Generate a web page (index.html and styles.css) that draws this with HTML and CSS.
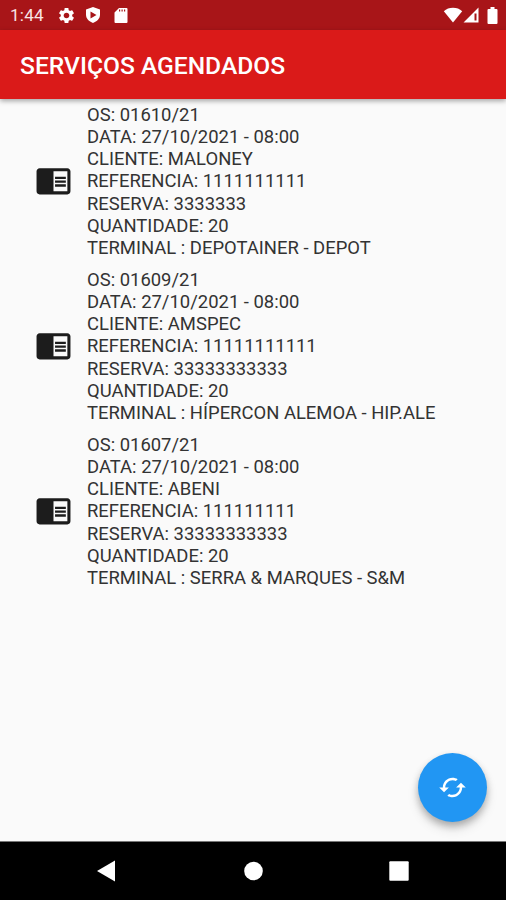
FILE: index.html
```html
<!DOCTYPE html>
<html lang="pt-BR">
<head>
    <meta charset="UTF-8">
    <title>Serviços Agendados</title>
    <link rel="stylesheet" href="styles.css">
</head>
<body>
    <div class="app">
        <div class="status-bar">
            <span class="time">1:44</span>
            <svg class="icon-gear" viewBox="0 0 24 24"><path fill-rule="evenodd" d="M19.14 12.94c.04-.3.06-.61.06-.94 0-.32-.02-.64-.07-.94l2.03-1.58c.18-.14.23-.41.12-.61l-1.92-3.32c-.12-.22-.37-.29-.59-.22l-2.39.96c-.5-.38-1.03-.7-1.62-.94l-.36-2.54c-.04-.24-.24-.41-.48-.41h-3.84c-.24 0-.43.17-.47.41l-.36 2.54c-.59.24-1.13.57-1.62.94l-2.39-.96c-.22-.08-.47 0-.59.22L2.74 8.87c-.12.21-.08.47.12.61l2.03 1.58c-.05.3-.09.63-.09.94s.02.64.07.94l-2.03 1.58c-.18.14-.23.41-.12.61l1.92 3.32c.12.22.37.29.59.22l2.39-.96c.5.38 1.03.7 1.62.94l.36 2.54c.05.24.24.41.48.41h3.84c.24 0 .44-.17.47-.41l.36-2.54c.59-.24 1.13-.56 1.62-.94l2.39.96c.22.08.47 0 .59-.22l1.92-3.32c.12-.22.07-.47-.12-.61l-2.01-1.58zM12 15.6c-1.98 0-3.6-1.62-3.6-3.6s1.62-3.6 3.6-3.6 3.6 1.62 3.6 3.6-1.62 3.6-3.6 3.6z"/></svg>
            <svg class="icon-shield" viewBox="0 0 16 18"><path fill-rule="evenodd" d="M8 1l7 2.600v5.200c0 3.700-2.900 6.800-7 8.200-4.100-1.400-7-4.500-7-8.200V3.600zM5.500 5.500v7L11.500 9z"/></svg>
            <svg class="icon-sd" viewBox="0 0 14 17"><path fill-rule="evenodd" d="M5 1h7.500Q13.500 1 13.500 2v13q0 1-1 1h-11q-1 0-1-1V5.500zM5 2.500v2h1.200v-2zM7.500 2.500v2h1.200v-2zM10 2.500v2h1.200v-2z"/></svg>
            <div class="signals">
                <svg class="icon-wifi" viewBox="0 0 20 16"><path d="M10 15.500L.8 4.200Q4.600.8 10 .8t9.200 3.400z"/></svg>
                <svg class="icon-cell" viewBox="0 0 16 16"><path fill-rule="evenodd" d="M15.500.5v15H.5zM11.500 6.500v7h2v-7z"/></svg>
                <svg class="icon-battery" viewBox="0 0 11 17"><path d="M3.500 0h4v2H9.500Q10.500 2 10.500 3v13q0 1-1 1h-8q-1 0-1-1V3q0-1 1-1h2z"/></svg>
            </div>
        </div>
        <header class="toolbar">
            <h1>SERVIÇOS AGENDADOS</h1>
        </header>

        <main class="list">
            <div class="item">
                <svg class="item-icon" viewBox="0 0 24 24"><path d="M13 12h7v1.5h-7zm0-2.500h7V11h-7zm0 5h7V16h-7zM21 4H3c-1.100 0-2 .9-2 2v13c0 1.100.9 2 2 2h18c1.100 0 2-.9 2-2V6c0-1.100-.9-2-2-2zm0 15h-9V6h9v13z"/></svg>
                <div class="item-text">
                    <p>OS: 01610/21</p>
                    <p>DATA: 27/10/2021 - 08:00</p>
                    <p>CLIENTE: MALONEY</p>
                    <p>REFERENCIA: 1111111111</p>
                    <p>RESERVA: 3333333</p>
                    <p>QUANTIDADE: 20</p>
                    <p>TERMINAL : DEPOTAINER - DEPOT</p>
                </div>
            </div>
            <div class="item">
                <svg class="item-icon" viewBox="0 0 24 24"><path d="M13 12h7v1.5h-7zm0-2.500h7V11h-7zm0 5h7V16h-7zM21 4H3c-1.100 0-2 .9-2 2v13c0 1.100.9 2 2 2h18c1.100 0 2-.9 2-2V6c0-1.100-.9-2-2-2zm0 15h-9V6h9v13z"/></svg>
                <div class="item-text">
                    <p>OS: 01609/21</p>
                    <p>DATA: 27/10/2021 - 08:00</p>
                    <p>CLIENTE: AMSPEC</p>
                    <p>REFERENCIA: 11111111111</p>
                    <p>RESERVA: 33333333333</p>
                    <p>QUANTIDADE: 20</p>
                    <p>TERMINAL : HÍPERCON ALEMOA - HIP.ALE</p>
                </div>
            </div>
            <div class="item">
                <svg class="item-icon" viewBox="0 0 24 24"><path d="M13 12h7v1.5h-7zm0-2.500h7V11h-7zm0 5h7V16h-7zM21 4H3c-1.100 0-2 .9-2 2v13c0 1.100.9 2 2 2h18c1.100 0 2-.9 2-2V6c0-1.100-.9-2-2-2zm0 15h-9V6h9v13z"/></svg>
                <div class="item-text">
                    <p>OS: 01607/21</p>
                    <p>DATA: 27/10/2021 - 08:00</p>
                    <p>CLIENTE: ABENI</p>
                    <p>REFERENCIA: 111111111</p>
                    <p>RESERVA: 33333333333</p>
                    <p>QUANTIDADE: 20</p>
                    <p>TERMINAL : SERRA &amp; MARQUES - S&amp;M</p>
                </div>
            </div>
        </main>

        <button class="fab" aria-label="Atualizar">
            <svg viewBox="0 0 24 24"><path d="M19 8l-4 4h3c0 3.310-2.690 6-6 6-1.010 0-1.970-.25-2.800-.7l-1.460 1.460C8.970 19.540 10.430 20 12 20c4.420 0 8-3.580 8-8h3l-4-4zM6 12c0-3.310 2.690-6 6-6 1.010 0 1.970.25 2.800.7l1.460-1.460C15.030 4.460 13.570 4 12 4c-4.420 0-8 3.580-8 8H1l4 4 4-4H6z"/></svg>
        </button>

        <nav class="nav-bar">
            <svg viewBox="0 0 22 22"><path d="M19 .5v21L1 11z"/></svg>
            <svg viewBox="0 0 22 22"><circle cx="11.500" cy="11" r="9.300"/></svg>
            <svg viewBox="0 0 22 22"><rect x="1.300" y="1.300" width="19.400" height="19.400" rx="1"/></svg>
        </nav>
    </div>
</body>
</html>
```
FILE: styles.css
```css
body {
    margin: 0;
    font-family: Roboto, "Liberation Sans", sans-serif;
    background-color: #fafafa;
}
.app {
    position: relative;
    display: flex;
    flex-direction: column;
    height: 900px;
    overflow: hidden;
}
.status-bar {
    display: flex;
    align-items: center;
    height: 30px;
    padding: 0 8px 0 10px;
    box-sizing: border-box;
    background-color: #a81518;
    color: #f8e4e4;
    fill: #fff;
}
.time {
    width: 47px;
    font-size: 17.2px;
    letter-spacing: 0.2px;
}
.icon-gear {
    width: 19px;
    height: 19px;
}
.icon-shield {
    width: 16px;
    height: 18px;
    margin-left: 9px;
}
.icon-sd {
    width: 14px;
    height: 17px;
    margin-left: 13px;
}
.signals {
    display: flex;
    align-items: center;
    margin-left: auto;
}
.icon-wifi {
    width: 20px;
    height: 16px;
}
.icon-cell {
    width: 16px;
    height: 16px;
}
.icon-battery {
    width: 11px;
    height: 17px;
    margin-left: 8px;
}
.toolbar {
    z-index: 1;
    display: flex;
    align-items: center;
    height: 69px;
    padding: 0 20px;
    background-color: #da1a19;
    box-shadow: 0 2px 5px rgba(0,0,0,0.35);
}
h1 {
    margin: 1px 0 0;
    color: #fff;
    font-size: 24.6px;
    font-weight: 500;
}
.list {
    flex: 1;
    padding: 5px 0 0 35px;
}
.item {
    display: flex;
    align-items: center;
    height: 165px;
}
.item-icon {
    width: 37px;
    height: 37px;
    margin: 0 15px 12px 0;
    fill: #1c1c1c;
}
.item-text {
    height: 165px;
    color: #333;
    font-size: 18.46px;
    line-height: 22.15px;
}
.item-text p {
    margin: 0;
}
/* Floats over the list */
.fab {
    position: absolute;
    right: 19px;
    bottom: 78px;
    display: flex;
    align-items: center;
    justify-content: center;
    width: 69px;
    height: 69px;
    padding: 0;
    border: none;
    border-radius: 50%;
    background-color: #2196f3;
    box-shadow: 0 4px 7px rgba(0,0,0,0.24), 0 7px 12px rgba(0,0,0,0.12);
}
.fab svg {
    width: 29px;
    height: 29px;
    fill: #fff;
}
.nav-bar {
    display: flex;
    align-items: center;
    justify-content: center;
    gap: 124px;
    height: 59px;
    padding-bottom: 1px;
    border-top: 1px solid #777;
    box-sizing: border-box;
    background-color: #000;
}
.nav-bar svg {
    width: 22px;
    height: 22px;
    fill: #fff;
}
```
